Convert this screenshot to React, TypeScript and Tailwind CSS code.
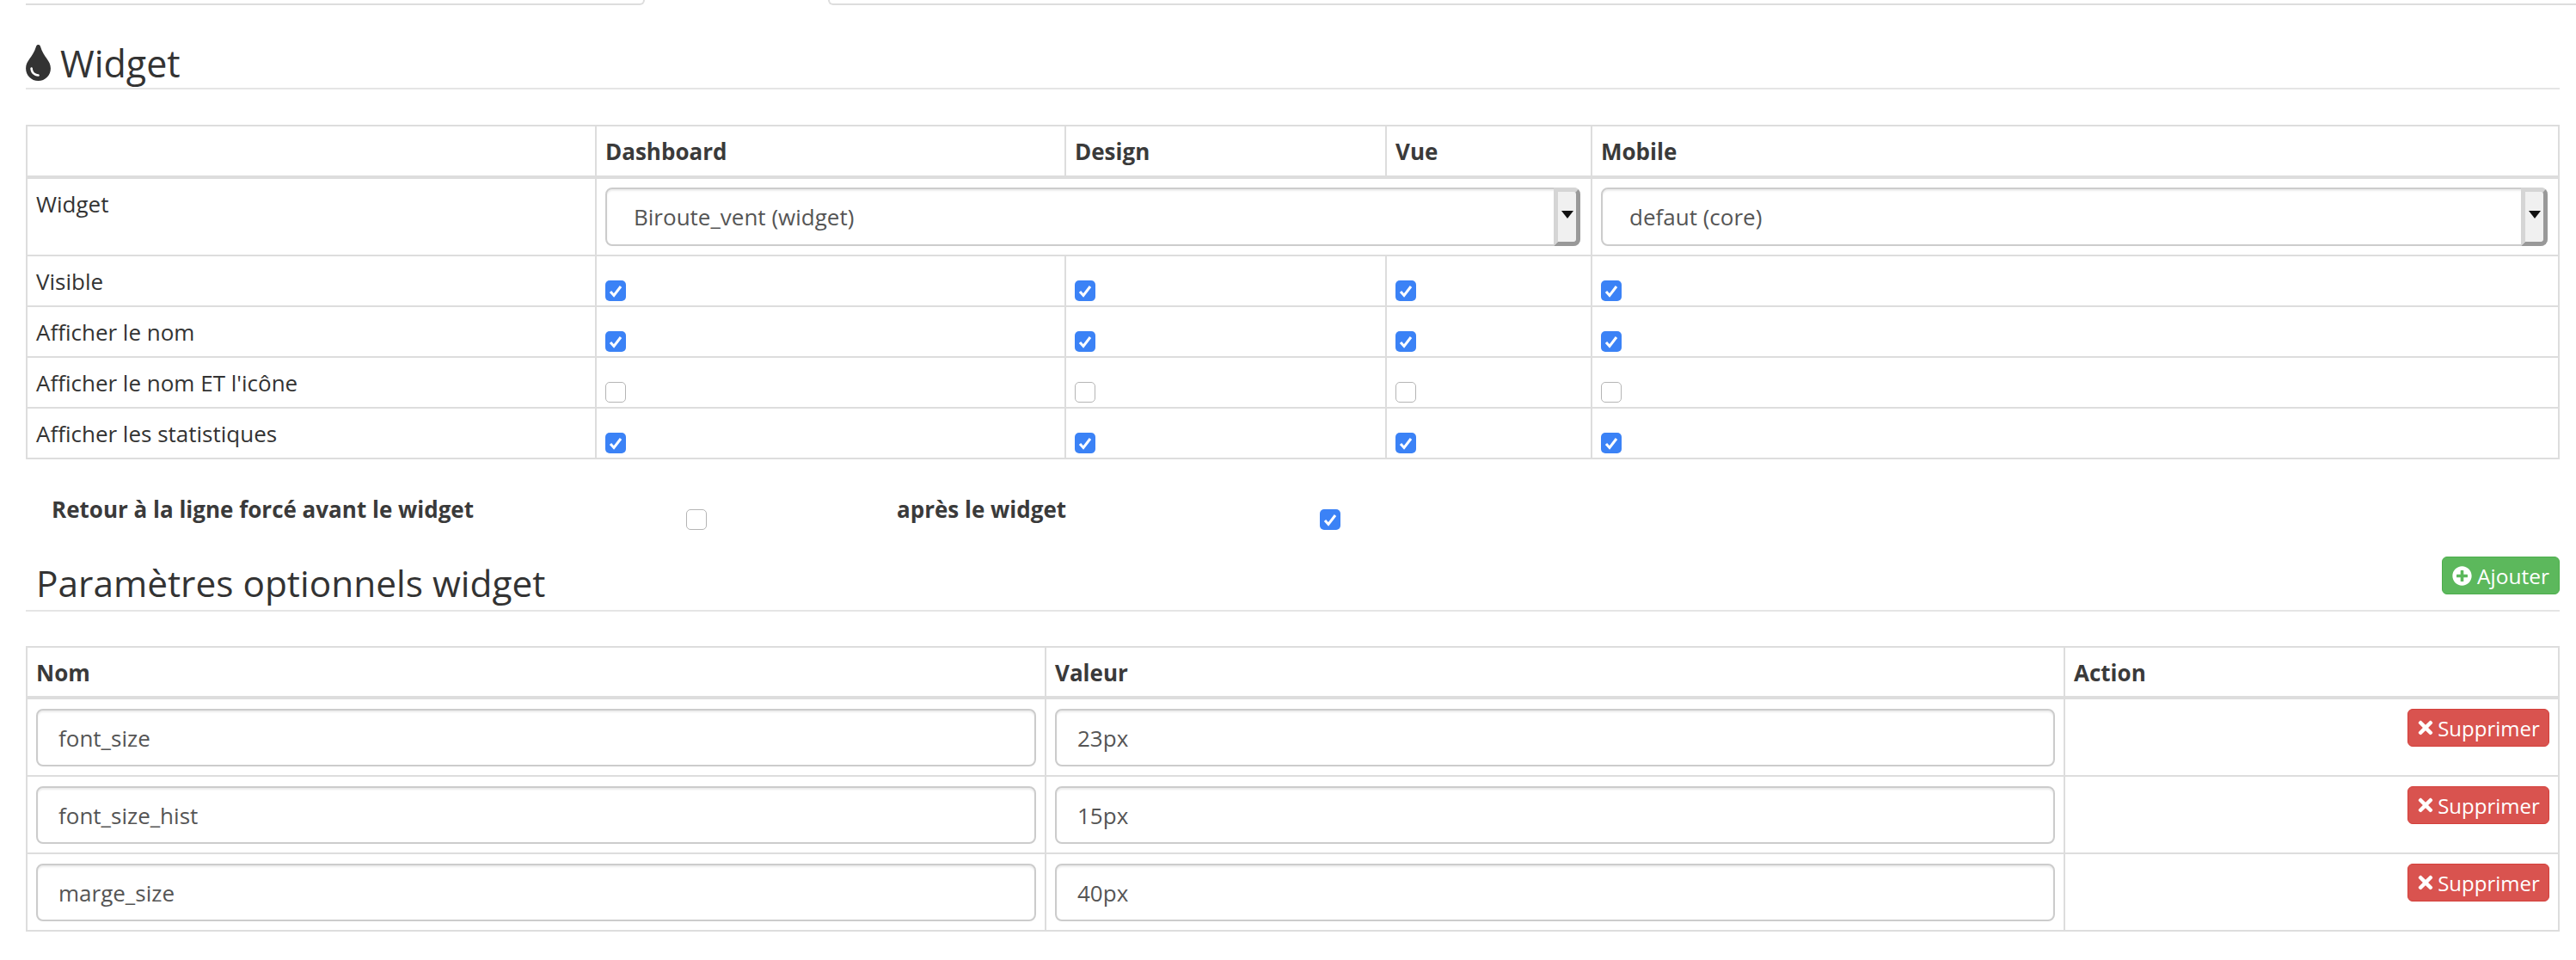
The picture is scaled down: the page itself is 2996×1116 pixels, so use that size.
import React from "react";
import { FaTint, FaPlusCircle, FaTimes } from "react-icons/fa";

const Box = (props: { on?: boolean }) => {
    if (props.on) {
        return (
            <span className="block w-6 h-6 rounded-[5px] bg-[#3b82f6]">
                <svg viewBox="0 0 24 24" className="w-6 h-6">
                    <path d="M6 13l4 4.5L18 7" fill="none" stroke="#fff" strokeWidth="3" />
                </svg>
            </span>
        );
    }
    return <span className="block w-6 h-6 rounded-[5px] bg-white border border-[#b5b5b5]"></span>;
};

const FakeSelect = (props: { label: string }) => (
    <div className="flex h-[68px] pl-[31px] border-2 border-[#ccc] rounded-lg shadow-[inset_0_2px_2px_rgba(0,0,0,0.075)] text-[#555]">
        <div className="flex-1 flex items-center">{props.label}</div>
        <div className="w-[31px] -my-[2px] -mr-[2px] flex items-center justify-center rounded-r-lg bg-[#f0f0f0] border-[5px] border-t-[#d5d5d5] border-l-[#d5d5d5] border-r-[#999] border-b-[#999]">
            <svg viewBox="0 0 14 9" className="w-[14px] h-[9px] -mt-[6px]">
                <path d="M0 0h14L7 9z" fill="#111" />
            </svg>
        </div>
    </div>
);

const rows = [
    { name: "Visible", on: true },
    { name: "Afficher le nom", on: true },
    { name: "Afficher le nom ET l'icône", on: false },
    { name: "Afficher les statistiques", on: true },
];

const params = [
    { name: "font_size", value: "23px" },
    { name: "font_size_hist", value: "15px" },
    { name: "marge_size", value: "40px" },
];

const cell = "border-2 border-[#ddd] align-top px-[10px]";
const head = "border-2 border-b-4 border-[#ddd] text-left font-bold text-[#3a3a3a] align-middle pl-[10px] pr-[10px] pt-[2px]";
const field = "block w-full h-[67px] border-2 border-[#ccc] rounded-lg pl-[24px] text-[#555] shadow-[inset_0_2px_2px_rgba(0,0,0,0.075)] outline-none";

export default function App() {
    return (
        <div className="w-[2996px] h-[1116px] overflow-hidden bg-white text-[#333] text-[26px] leading-[37px] font-['Open_Sans',sans-serif]">
            {/* tabs, only their bottom line is in view */}
            <div className="flex pl-[30px] h-[6px]">
                <div className="w-[720px] border-b-2 border-r-2 border-[#ddd] rounded-br-md"></div>
                <div className="w-[213px]"></div>
                <div className="flex-1 border-b-2 border-l-2 border-[#ddd] rounded-bl-md"></div>
            </div>

            <div className="pl-[30px] pr-[19px]">
                <div className="flex items-center h-[60px] mt-[38px] border-b-2 border-[#e5e5e5] text-[43px] leading-none">
                    <FaTint className="w-[29px] h-[42px] mr-[11px] text-[#333]" />
                    <span>Widget</span>
                </div>

                <table className="w-full table-fixed border-collapse mt-[41px]">
                    <colgroup>
                        <col className="w-[662px]" />
                        <col className="w-[546px]" />
                        <col className="w-[373px]" />
                        <col className="w-[239px]" />
                        <col />
                    </colgroup>
                    <thead>
                        <tr className="h-[60px]">
                            <th className={head}></th>
                            <th className={head}>Dashboard</th>
                            <th className={head}>Design</th>
                            <th className={head}>Vue</th>
                            <th className={head}>Mobile</th>
                        </tr>
                    </thead>
                    <tbody>
                        <tr>
                            <td className={cell + " pt-[11px]"}>Widget</td>
                            <td colSpan={3} className={cell + " !pr-[12px] py-[10px]"}>
                                <FakeSelect label="Biroute_vent (widget)" />
                            </td>
                            <td className={cell + " !pr-[12px] py-[10px]"}>
                                <FakeSelect label="defaut (core)" />
                            </td>
                        </tr>
                        {rows.map((r) => (
                            <tr key={r.name}>
                                <td className={cell + " pt-[11px]"}>{r.name}</td>
                                {[0, 1, 2, 3].map((i) => (
                                    <td key={i} className={cell + " pt-[28px] pb-[5px]"}>
                                        <Box on={r.on} />
                                    </td>
                                ))}
                            </tr>
                        ))}
                    </tbody>
                </table>

                <div className="flex items-start mt-[40px] pl-[30px] font-bold text-[#3a3a3a]">
                    <div className="w-[738px]">Retour à la ligne forcé avant le widget</div>
                    <div className="w-[245px] pt-[18px]"><Box /></div>
                    <div className="w-[492px]">après le widget</div>
                    <div className="pt-[18px]"><Box on /></div>
                </div>

                <div className="flex justify-between items-start h-[68px] mt-[27px] border-b-2 border-[#e5e5e5]">
                    <span className="pl-[12px] text-[42.4px] leading-[60px] pt-[5px]">Paramètres optionnels widget</span>
                    <button className="flex items-center justify-center w-[137px] h-[44px] mt-[4px] rounded-md bg-[#5cb85c] border border-[#4cae4c] text-white text-[24.5px]">
                        <FaPlusCircle className="w-[23px] h-[23px] mr-[6px]" />
                        Ajouter
                    </button>
                </div>

                <table className="w-full table-fixed border-collapse mt-[40px]">
                    <colgroup>
                        <col className="w-[1185px]" />
                        <col className="w-[1185px]" />
                        <col />
                    </colgroup>
                    <thead>
                        <tr className="h-[59px]">
                            <th className={head}>Nom</th>
                            <th className={head}>Valeur</th>
                            <th className={head}>Action</th>
                        </tr>
                    </thead>
                    <tbody>
                        {params.map((p) => (
                            <tr key={p.name}>
                                <td className={cell + " pt-[11px] pb-[10px]"}>
                                    <input className={field} defaultValue={p.name} />
                                </td>
                                <td className={cell + " pt-[11px] pb-[10px]"}>
                                    <input className={field} defaultValue={p.value} />
                                </td>
                                <td className={cell + " pt-[11px] pb-[10px]"}>
                                    <div className="flex justify-end">
                                        <button className="flex items-center justify-center w-[165px] h-[44px] rounded-md bg-[#d9534f] border border-[#d43f3a] text-white text-[24px]">
                                            <FaTimes className="w-[20px] h-[24px] mr-[4px]" />
                                            Supprimer
                                        </button>
                                    </div>
                                </td>
                            </tr>
                        ))}
                    </tbody>
                </table>
            </div>
        </div>
    );
}
